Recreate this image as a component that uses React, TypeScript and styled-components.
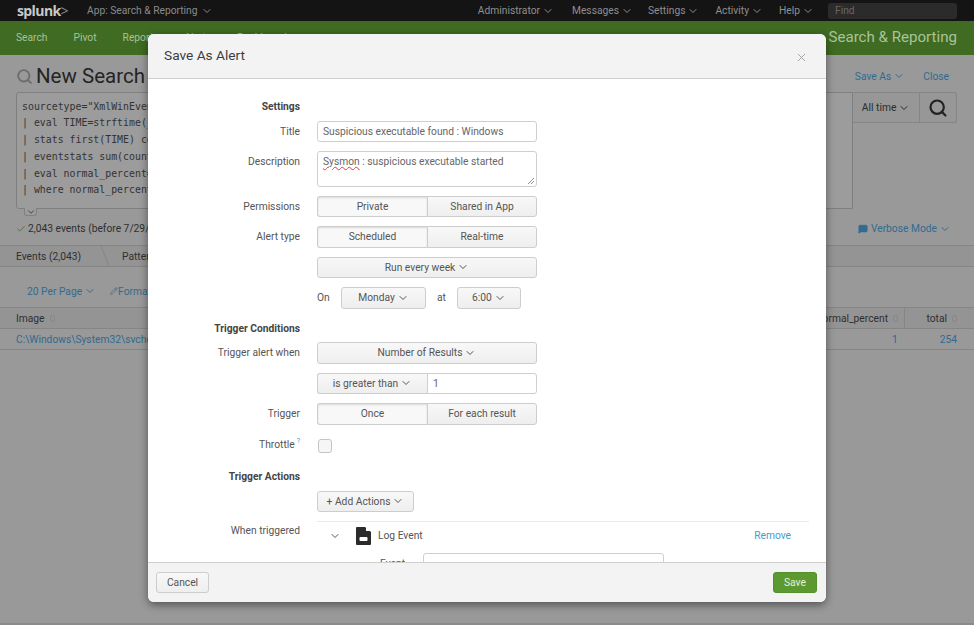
import React from 'react';
import styled, { createGlobalStyle } from 'styled-components';
import { ChevronDown, X, Check, Search, Pencil, MessageSquare } from 'lucide-react';

const GlobalStyle = createGlobalStyle`
  html, body {
    margin: 0;
    padding: 0;
    background: #999;
  }
  body {
    font-family: Roboto, "Liberation Sans", sans-serif;
    font-size: 10.25px;
  }
  * {
    box-sizing: border-box;
  }
`;

const Page = styled.div`
  position: relative;
  width: 974px;
  height: 625px;
  overflow: hidden;
  background: #999;
  display: flex;
  flex-direction: column;
  border-bottom: 2px solid #8a8a8a;
`;

const TopBar = styled.div`
  height: 21px;
  flex: none;
  background: #141414;
  color: #8f8f8f;
  display: flex;
  align-items: center;
  padding: 0 17px;
`;

const Logo = styled.span`
  font-family: "Open Sans", sans-serif;
  font-size: 14px;
  font-weight: 700;
  letter-spacing: -0.6px;
  color: #c9c9c9;
  width: 70px;
  flex: none;

  em {
    font-style: normal;
    font-weight: 400;
    color: #8a8a8a;
  }
`;

const AppMenu = styled.span`
  display: flex;
  align-items: center;
  gap: 1px;
  color: #8a8a8a;
`;

const TopMenus = styled.div`
  margin-left: auto;
  display: flex;
  align-items: center;
`;

const TopItem = styled.span<{ $gap: number }>`
  display: flex;
  align-items: center;
  margin-right: ${p => p.$gap}px;
`;

const FindBox = styled.div`
  width: 129px;
  height: 16px;
  border-radius: 3px;
  background: #2b2b2b;
  color: #666;
  padding: 1px 7px;
  line-height: 14px;
`;

const GreenBar = styled.div`
  height: 34px;
  flex: none;
  background: #3f6b22;
  color: #a9c197;
  display: flex;
  align-items: center;
  padding: 0 17px 2px 16px;
`;

const GreenTab = styled.span`
  margin-right: 26px;
`;

const AppTitle = styled.span`
  margin-left: auto;
  font-size: 15.1px;
  color: #a9c49b;
`;

const TitleRow = styled.div`
  display: flex;
  align-items: center;
  height: 37px;
  flex: none;
  padding: 5px 25px 0 16px;
  color: #2c2c2c;
`;

const PageTitle = styled.h1`
  margin: 0 0 0 3px;
  font-size: 20.5px;
  font-weight: 400;
  color: #242424;
`;

const TitleLinks = styled.div`
  margin-left: auto;
  display: flex;
  align-items: center;
  gap: 18px;
  color: #326b90;
`;

const LinkItem = styled.span`
  display: flex;
  align-items: center;
  color: #326b90;
`;

const SearchRow = styled.div`
  display: flex;
  align-items: flex-start;
  padding: 0 17px 0 16px;
  flex: none;
`;

const QueryBox = styled.div`
  position: relative;
  width: 838px;
  height: 117px;
  border: 1px solid #7f7f7f;
  border-radius: 3px 0 0 3px;
  padding: 5.5px 5px;
  font-family: "DejaVu Sans Mono", monospace;
  font-size: 9.9px;
  line-height: 16.8px;
  color: #333;
  background: #9c9c9c;
  white-space: pre;
  overflow: visible;
`;

const ExpandTab = styled.span`
  position: absolute;
  left: 7px;
  bottom: -8px;
  width: 13px;
  height: 8px;
  background: #9c9c9c;
  border: 1px solid #808080;
  border-top: 0;
  border-radius: 0 0 3px 3px;
  display: flex;
  align-items: center;
  justify-content: center;
  color: #333;
`;

const TimeButton = styled.span`
  width: 67px;
  height: 31px;
  border: 1px solid #858585;
  border-left: 0;
  display: flex;
  align-items: center;
  justify-content: center;
  color: #2c2c2c;
  background: #979797;
`;

const SearchButton = styled.span`
  width: 37px;
  height: 31px;
  border: 1px solid #858585;
  border-left: 0;
  border-radius: 0 3px 3px 0;
  display: flex;
  align-items: center;
  justify-content: center;
  color: #222;
  background: #979797;
`;

const StatusRow = styled.div`
  height: 37px;
  flex: none;
  display: flex;
  align-items: center;
  padding: 3px 23px 0 16px;
  color: #2f2f2f;
  border-bottom: 1px solid #858585;
`;

const CheckMark = styled.span`
  color: #44702a;
  display: flex;
  margin-right: 2px;
`;

const TabsRow = styled.div`
  height: 21px;
  flex: none;
  display: flex;
  align-items: center;
  padding-left: 16px;
  color: #2f2f2f;
  background: #949494;
  border-bottom: 1px solid #858585;
`;

const TabLabel = styled.span<{ $width: number }>`
  width: ${p => p.$width}px;
`;

const TabSlant = styled.svg`
  flex: none;
  margin-right: 12px;
`;

const ToolRow = styled.div`
  height: 40px;
  flex: none;
  display: flex;
  align-items: center;
  gap: 14px;
  padding: 8px 0 0 27px;
  color: #326b90;
`;

const HeadRow = styled.div`
  height: 22px;
  flex: none;
  display: flex;
  align-items: center;
  padding: 0 17px 0 16px;
  border-top: 1px solid #858585;
  border-bottom: 1px solid #858585;
  background: #949494;
  color: #2f2f2f;
`;

const HeadCell = styled.span`
  display: flex;
  align-items: center;
  gap: 5px;
`;

const HeadTotal = styled(HeadCell)`
  width: 53px;
  height: 100%;
  justify-content: flex-end;
  border-left: 1px solid #858585;
  margin-left: 6px;
`;

const SortMark = styled.span`
  width: 5px;
  height: 7px;
  border: 1px solid #858585;
  border-radius: 3px;
`;

const DataRow = styled.div`
  height: 21px;
  flex: none;
  display: flex;
  align-items: center;
  padding: 0 17px 0 16px;
  border-bottom: 1px solid #858585;
  color: #2f6a92;
`;

const Spacer = styled.span`
  flex: 1;
`;

const RowNumber = styled.span`
  margin-right: 42px;
`;

const Modal = styled.div`
  position: absolute;
  left: 148px;
  top: 34px;
  width: 678px;
  height: 568px;
  display: flex;
  flex-direction: column;
  background: #fff;
  border-radius: 6px;
  overflow: hidden;
  box-shadow: 0 3px 8px rgba(0, 0, 0, 0.45);
  color: #555;
`;

const ModalHeader = styled.div`
  height: 45px;
  flex: none;
  display: flex;
  align-items: center;
  justify-content: space-between;
  padding: 0 18px 0 16px;
  background: #f3f3f3;
  border-bottom: 1px solid #cfcfcf;
`;

const ModalTitle = styled.h3`
  margin: 0 0 2px;
  font-size: 13.7px;
  font-weight: 400;
  color: #3c3c3c;
`;

const CloseIcon = styled.span`
  display: flex;
  color: #999;
  margin-top: 3px;
`;

const ModalBody = styled.div`
  flex: 1;
  min-height: 0;
  overflow: hidden;
  padding-top: 20px;
  display: flex;
  flex-direction: column;
  gap: 9px;
`;

const Row = styled.div`
  display: grid;
  grid-template-columns: 152px 220px;
  column-gap: 17px;
  align-items: center;
  min-height: 21.5px;
  flex: none;
`;

const TopRow = styled(Row)`
  align-items: start;
`;

const Label = styled.label`
  text-align: right;
  color: #555;
`;

const TopLabel = styled(Label)`
  padding-top: 4px;
`;

const Section = styled.div<{ $top?: number }>`
  width: 152px;
  height: 16px;
  line-height: 16px;
  flex: none;
  margin-top: ${p => p.$top ?? 0}px;
  margin-bottom: -3.5px;
  text-align: right;
  font-weight: 700;
  color: #444;
`;

const TextInput = styled.div`
  height: 21.5px;
  border: 1px solid #cfcfcf;
  border-radius: 3px;
  padding: 0 5px;
  line-height: 20px;
  color: #666;
  background: #fff;
`;

const TextArea = styled(TextInput)`
  position: relative;
  height: 35.5px;
  padding-top: 1px;
  line-height: 18px;
`;

const Squiggle = styled.span`
  text-decoration: underline wavy #d8403a 1px;
`;

const Resizer = styled.svg`
  position: absolute;
  right: 1px;
  bottom: 1px;
`;

const Buttons = styled.div`
  display: flex;
  width: 220px;
  height: 21.5px;
`;

const Button = styled.span<{ $active?: boolean; $wide?: boolean; $width?: number }>`
  flex: ${p => (p.$wide ? 1 : 'none')};
  width: ${p => (p.$width ? `${p.$width}px` : 'auto')};
  height: 21.5px;
  display: flex;
  align-items: center;
  justify-content: center;
  border: 1px solid #cdcdcd;
  border-radius: 3px;
  color: #555;
  background: ${p => (p.$active ? '#f8f8f8' : 'linear-gradient(#f8f8f8, #eeeeee)')};
  box-shadow: ${p => (p.$active ? 'inset 0 1px 2px rgba(0,0,0,0.12)' : 'none')};
`;

const LeftButton = styled(Button)`
  border-radius: 3px 0 0 3px;
  border-right: 0;
`;

const RightButton = styled(Button)`
  border-radius: 0 3px 3px 0;
`;

const NumberInput = styled(TextInput)`
  flex: 1;
  border-radius: 0 3px 3px 0;
`;

const ScheduleRow = styled.div`
  display: flex;
  align-items: center;
  color: #555;
`;

const ScheduleWord = styled.span<{ $width: number; $inset?: number }>`
  width: ${p => p.$width}px;
  padding-left: ${p => p.$inset ?? 0}px;
`;

const Help = styled.sup`
  color: #4a9bc7;
  font-size: 7px;
  margin-left: 2px;
  line-height: 0;
`;

const CheckBox = styled.span`
  width: 14px;
  height: 14px;
  margin: 3px 0 0 1px;
  border: 1px solid #c4c4c4;
  border-radius: 3px;
  background: #f6f6f6;
  display: block;
`;

const ActionBlock = styled.div`
  display: grid;
  grid-template-columns: 152px 492px;
  column-gap: 17px;
  flex: none;
`;

const ActionLabel = styled(Label)`
  padding-top: 3px;
`;

const ActionPanel = styled.div`
  border-top: 1px solid #eaeaea;
`;

const ActionHead = styled.div`
  height: 27px;
  display: flex;
  align-items: center;
  padding: 0 18px 0 10px;
  color: #555;
`;

const LogName = styled.span`
  margin-left: 7px;
`;

const LogIconWrap = styled.svg`
  margin-left: 15px;
  flex: none;
`;

const RemoveLink = styled.span`
  margin-left: auto;
  color: #4a9bc7;
`;

const EventRow = styled.div`
  display: flex;
  align-items: center;
  margin-top: 4px;
  padding-left: 63px;
`;

const EventInput = styled(TextInput)`
  width: 241px;
  margin-left: 18px;
`;

const ModalFooter = styled.div`
  height: 40px;
  flex: none;
  display: flex;
  align-items: center;
  justify-content: space-between;
  padding: 0 9px 0 8px;
  background: #f3f3f3;
  border-top: 1px solid #cfcfcf;
`;

const CancelButton = styled(Button)`
  width: 53px;
`;

const SaveButton = styled(Button)`
  width: 44px;
  color: #e6f0dd;
  background: #5c9a31;
  border-color: #54902b;
`;

const ChevronIcon = styled(ChevronDown)`
  flex: none;
  margin-left: 2px;
`;

const Chevron = ({ size = 12 }: { size?: number }) => <ChevronIcon size={size} strokeWidth={2} />;

const LogIcon = () => (
  <LogIconWrap width="15" height="18" viewBox="0 0 15 18">
    <path d="M0 1a1 1 0 0 1 1-1h8l6 5v12a1 1 0 0 1-1 1H1a1 1 0 0 1-1-1z" fill="#2b2b2b" />
    <path d="M10 0v4h5z" fill="#fff" />
    <rect x="3.5" y="10" width="8" height="4" rx="1" fill="#fff" />
  </LogIconWrap>
);

const query = `sourcetype="XmlWinEventLog:Microsoft-Windows-Sysmon/Operational" EventCode=1
| eval TIME=strftime(_time,"%Y-%m-%d %H:%M:%S")
| stats first(TIME) count by Image
| eventstats sum(count) as total
| eval normal_percent=round(count*100/total)
| where normal_percent<5`;

const App = () => {
  return (
    <Page>
      <GlobalStyle />
      <TopBar>
        <Logo>
          splunk<em>&gt;</em>
        </Logo>
        <AppMenu>
          App: Search &amp; Reporting <Chevron />
        </AppMenu>
        <TopMenus>
          <TopItem $gap={18}>Administrator <Chevron /></TopItem>
          <TopItem $gap={15}>Messages <Chevron /></TopItem>
          <TopItem $gap={16}>Settings <Chevron /></TopItem>
          <TopItem $gap={16}>Activity <Chevron /></TopItem>
          <TopItem $gap={14}>Help <Chevron /></TopItem>
          <FindBox>Find</FindBox>
        </TopMenus>
      </TopBar>

      <GreenBar>
        <GreenTab>Search</GreenTab>
        <GreenTab>Pivot</GreenTab>
        <GreenTab>Reports</GreenTab>
        <GreenTab>Alerts</GreenTab>
        <GreenTab>Dashboards</GreenTab>
        <AppTitle>Search &amp; Reporting</AppTitle>
      </GreenBar>

      <TitleRow>
        <Search size={17} color="#6c6c6c" strokeWidth={2.6} />
        <PageTitle>New Search</PageTitle>
        <TitleLinks>
          <LinkItem>Save As <Chevron /></LinkItem>
          <LinkItem>Close</LinkItem>
        </TitleLinks>
      </TitleRow>

      <SearchRow>
        <QueryBox>
          {query}
          <ExpandTab><ChevronDown size={10} strokeWidth={2} /></ExpandTab>
        </QueryBox>
        <TimeButton>All time <Chevron /></TimeButton>
        <SearchButton><Search size={20} strokeWidth={2.6} /></SearchButton>
      </SearchRow>

      <StatusRow>
        <CheckMark><Check size={10} strokeWidth={2} /></CheckMark>
        2,043 events (before 7/29/2016 2:41:13.000 PM)
        <Spacer />
        <LinkItem>
          <MessageSquare size={10} fill="#326b90" strokeWidth={1.5} />
          &nbsp;Verbose Mode <Chevron />
        </LinkItem>
      </StatusRow>

      <TabsRow>
        <TabLabel $width={84}>Events (2,043)</TabLabel>
        <TabSlant width="10" height="20" viewBox="0 0 10 20">
          <path d="M1 0l8 20" stroke="#858585" fill="none" />
        </TabSlant>
        <TabLabel $width={80}>Patterns</TabLabel>
      </TabsRow>

      <ToolRow>
        <LinkItem>20 Per Page <Chevron /></LinkItem>
        <LinkItem><Pencil size={8} />Format</LinkItem>
      </ToolRow>

      <HeadRow>
        <HeadCell>Image <SortMark /></HeadCell>
        <Spacer />
        <HeadCell>normal_percent <SortMark /></HeadCell>
        <HeadTotal>total <SortMark /></HeadTotal>
      </HeadRow>

      <DataRow>
        C:\Windows\System32\svchost.exe
        <Spacer />
        <RowNumber>1</RowNumber>
        254
      </DataRow>

      <Modal>
        <ModalHeader>
          <ModalTitle>Save As Alert</ModalTitle>
          <CloseIcon><X size={13} strokeWidth={1.6} /></CloseIcon>
        </ModalHeader>

        <ModalBody>
          <Section>Settings</Section>
          <Row>
            <Label>Title</Label>
            <TextInput>Suspicious executable found : Windows</TextInput>
          </Row>
          <TopRow>
            <TopLabel>Description</TopLabel>
            <TextArea>
              <Squiggle>Sysmon</Squiggle> : suspicious executable started
              <Resizer width="8" height="8" viewBox="0 0 8 8">
                <path d="M1 7l6-6M4 7l3-3" stroke="#777" strokeWidth="0.8" fill="none" />
              </Resizer>
            </TextArea>
          </TopRow>
          <Row>
            <Label>Permissions</Label>
            <Buttons>
              <LeftButton $active $width={110}>Private</LeftButton>
              <RightButton $wide>Shared in App</RightButton>
            </Buttons>
          </Row>
          <Row>
            <Label>Alert type</Label>
            <Buttons>
              <LeftButton $active $width={110}>Scheduled</LeftButton>
              <RightButton $wide>Real-time</RightButton>
            </Buttons>
          </Row>
          <Row>
            <span />
            <Button>Run every week <Chevron /></Button>
          </Row>
          <Row>
            <span />
            <ScheduleRow>
              <ScheduleWord $width={24}>On</ScheduleWord>
              <Button $width={85}>Monday <Chevron /></Button>
              <ScheduleWord $width={31} $inset={11}>at</ScheduleWord>
              <Button $width={64}>6:00 <Chevron /></Button>
            </ScheduleRow>
          </Row>

          <Section $top={3}>Trigger Conditions</Section>
          <Row>
            <Label>Trigger alert when</Label>
            <Button>Number of Results <Chevron /></Button>
          </Row>
          <Row>
            <span />
            <Buttons>
              <LeftButton $width={110}>is greater than <Chevron /></LeftButton>
              <NumberInput>1</NumberInput>
            </Buttons>
          </Row>
          <Row>
            <Label>Trigger</Label>
            <Buttons>
              <LeftButton $active $width={110}>Once</LeftButton>
              <RightButton $wide>For each result</RightButton>
            </Buttons>
          </Row>
          <Row>
            <Label>Throttle<Help>?</Help></Label>
            <CheckBox />
          </Row>

          <Section $top={5}>Trigger Actions</Section>
          <Row>
            <span />
            <Button $width={97}>+ Add Actions <Chevron /></Button>
          </Row>

          <ActionBlock>
            <ActionLabel>When triggered</ActionLabel>
            <ActionPanel>
              <ActionHead>
                <Chevron />
                <LogIcon />
                <LogName>Log Event</LogName>
                <RemoveLink>Remove</RemoveLink>
              </ActionHead>
              <EventRow>
                Event
                <EventInput />
              </EventRow>
            </ActionPanel>
          </ActionBlock>
        </ModalBody>

        <ModalFooter>
          <CancelButton>Cancel</CancelButton>
          <SaveButton>Save</SaveButton>
        </ModalFooter>
      </Modal>
    </Page>
  );
};

export default App;
